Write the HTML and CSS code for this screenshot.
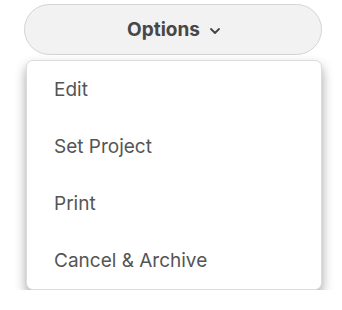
FILE: index.html
```html
<!DOCTYPE html>
<html>
<head>
<meta charset="utf-8">
<link rel="stylesheet" href="styles.css">
</head>
<body>
<div class="wrap">
  <button class="trigger">
    <span class="label">Options</span>
    <svg class="chev" width="12" height="8" viewBox="0 0 12 8"><path d="M2 2 L6 6 L10 2" fill="none" stroke="#444" stroke-width="1.8" stroke-linecap="round" stroke-linejoin="round"/></svg>
  </button>
  <ul class="menu">
    <li class="item">Edit</li>
    <li class="item">Set Project</li>
    <li class="item">Print</li>
    <li class="item">Cancel &amp; Archive</li>
  </ul>
</div>
</body>
</html>
```
FILE: styles.css
```css
* { box-sizing: border-box; }
html, body { margin: 0; padding: 0; background: #fff; }
body { font-family: Inter, "Noto Sans", sans-serif; }
.wrap {
  padding: 4px 20px 0 24px;
  display: flex;
  flex-direction: column;
}
.trigger {
  width: 298px;
  height: 51px;
  border-radius: 26px;
  border: 1px solid #d4d4d4;
  background: #f2f2f2;
  display: flex;
  align-items: center;
  justify-content: center;
  gap: 9px;
  font-family: inherit;
  font-size: 19px;
  font-weight: 700;
  color: #474747;
  padding: 0 0 0 2px;
}
.chev { margin-top: 2px; }
.menu {
  list-style: none;
  margin: 5px 0 0 2px;
  padding: 0;
  width: 296px;
  background: #fff;
  border: 1px solid #dcdcdc;
  border-radius: 7px;
  box-shadow: 0 6px 12px rgba(0,0,0,0.36);
}
.item {
  height: 57px;
  display: flex;
  align-items: center;
  padding-left: 27px;
  font-size: 19px;
  color: #555;
}
```
